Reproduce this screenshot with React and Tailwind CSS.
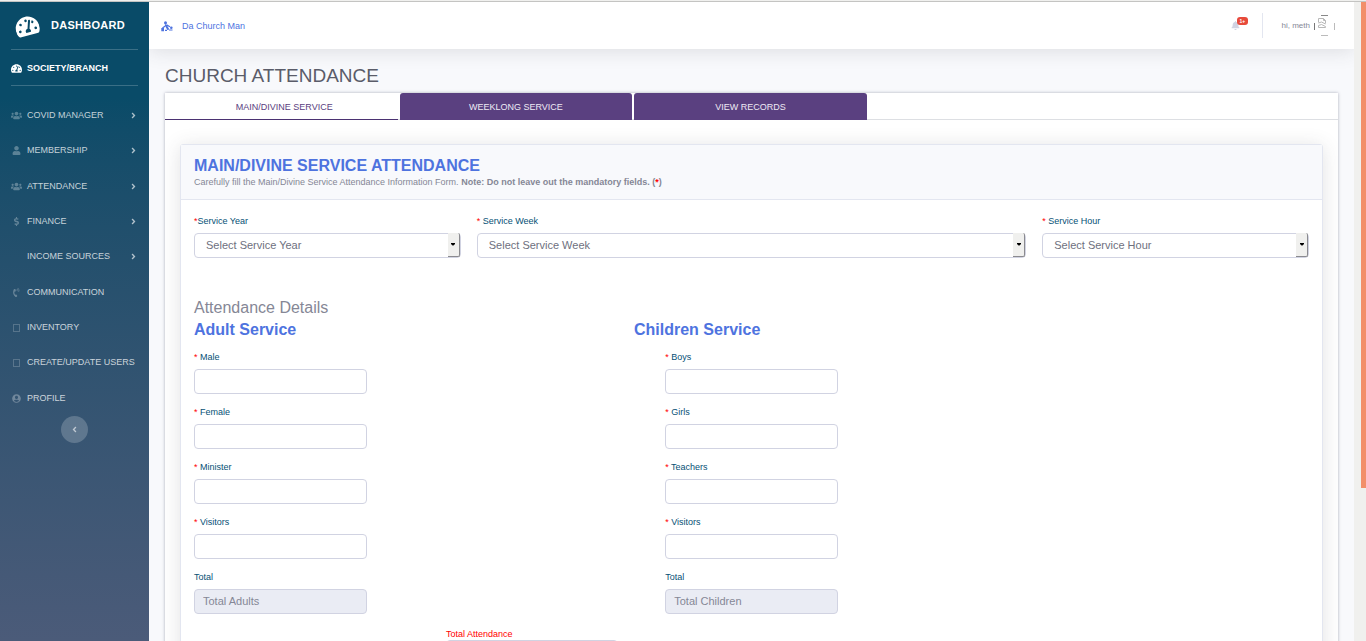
import React from "react";
import {
  FaTachometerAlt,
  FaUsers,
  FaUser,
  FaDollarSign,
  FaPhoneVolume,
  FaUserCircle,
  FaAngleRight,
  FaAngleLeft,
  FaBell,
} from "react-icons/fa";

function BoxGlyph() {
  return <span className="block h-2 w-[7px] border border-white/20" />;
}

const NAV = [
  { label: "COVID MANAGER", icon: <FaUsers size={11} />, more: true },
  { label: "MEMBERSHIP", icon: <FaUser size={9} />, more: true },
  { label: "ATTENDANCE", icon: <FaUsers size={11} />, more: true },
  { label: "FINANCE", icon: <FaDollarSign size={9} />, more: true },
  { label: "INCOME SOURCES", icon: null, more: true },
  { label: "COMMUNICATION", icon: <FaPhoneVolume size={9} className="-rotate-12" /> },
  { label: "INVENTORY", icon: <BoxGlyph /> },
  { label: "CREATE/UPDATE USERS", icon: <BoxGlyph /> },
  { label: "PROFILE", icon: <FaUserCircle size={9} /> },
];

function Sidebar() {
  return (
    <aside className="flex w-[149px] shrink-0 flex-col bg-linear-to-b from-[#094b68] from-15% to-[#4b5b79] text-[9px]">
      <a href="#" className="flex h-[47px] items-center gap-3 pl-[15px] text-[11px] font-bold tracking-wide text-white">
        <FaTachometerAlt size={24} className="-rotate-15" />
        DASHBOARD
      </a>
      <a
        href="#"
        className="mx-[11px] flex h-[37px] items-center gap-[5px] border-y border-white/20 pt-[2px] font-bold text-white"
      >
        <FaTachometerAlt size={11} />
        SOCIETY/BRANCH
      </a>
      <nav className="mt-3 grid h-[318px] auto-rows-fr">
        {NAV.map((item) => (
          <a key={item.label} href="#" className="flex items-center whitespace-nowrap pr-[11px] pl-[11px] text-white/75">
            <span className="mr-[5px] flex w-[11px] shrink-0 justify-center text-white/30">{item.icon}</span>
            <span className="flex-1">{item.label}</span>
            {item.more && <FaAngleRight size={9} className="shrink-0 text-white/65" />}
          </a>
        ))}
      </nav>
      <button
        type="button"
        aria-label="Collapse menu"
        className="flex size-[27px] items-center justify-center self-center rounded-full bg-white/20 text-white/60"
      >
        <FaAngleLeft size={9} />
      </button>
    </aside>
  );
}

function BrandIcon() {
  return (
    <svg width="12" height="11" viewBox="0 0 12 11" fill="none" aria-hidden="true">
      <circle cx="4.500" cy="1.700" r="1.500" fill="#4e73df" />
      <path d="M4.800 4.200L7 8" stroke="#4e73df" strokeWidth="2" strokeLinecap="round" />
      <path d="M6 4.200L8.500 5.500M3.600 5.500L1.800 6.800" stroke="#4e73df" strokeWidth="1.300" strokeLinecap="round" />
      <circle cx="10.300" cy="6.800" r="1.300" fill="#4e73df" />
      <path d="M.3 7h2.700v3.300H.3zM4 8.800h2v1.200H4zM8 8.500h3.500v1H8z" fill="#4e73df" />
    </svg>
  );
}

function BrokenAvatar() {
  return (
    <svg width="21" height="22" viewBox="0 0 21 22" fill="none" aria-hidden="true">
      <path d="M.5 8v7" stroke="#777" />
      <path d="M20.500 8v7" stroke="#bbb" />
      <path d="M7 .500h7" stroke="#888" />
      <path d="M7 20.500h7" stroke="#bbb" />
      <path d="M4.500 3.500h5l2 2v3M4.500 3.500v4M4.500 8l3-1 4 2M9.500 3.500v2h2M4.500 12.500v-2l3-1 4 2v1M4.500 12.500h7" stroke="#b8b8b8" />
    </svg>
  );
}

function Topbar() {
  return (
    <header className="relative z-10 flex h-[47px] shrink-0 items-center bg-white pr-[19px] pl-[12px] shadow-[0_2px_19px_rgba(58,59,69,0.15)]">
      <a href="#" className="flex items-center gap-[9px] pt-[2px] text-[9px] text-[#4e73df]">
        <BrandIcon />
        Da Church Man
      </a>
      <div className="ml-auto flex items-center">
        <button type="button" aria-label="Notifications" className="relative mr-[22px] block text-[#d1d3e2]">
          <FaBell size={9} />
          <span className="absolute -top-1 left-[6px] rounded-[3px] bg-[#e74a3b] px-[3px] text-[5px] leading-[8px] font-bold text-white">
            1+
          </span>
        </button>
        <span className="h-[25px] w-px bg-[#e3e6f0]" />
        <a href="#" className="ml-[19px] flex items-center gap-1 text-[8px] text-[#858796]">
          hi, meth
          <BrokenAvatar />
        </a>
      </div>
    </header>
  );
}

function Tab({ label, active }) {
  return (
    <div className="w-1/5 pr-[2px]">
      <button
        type="button"
        role="tab"
        aria-selected={!!active}
        className={
          active
            ? "block h-[27px] w-full border-b border-[#4b3272] bg-white pt-[3px] pl-[6px] text-[#5a4080]"
            : "block h-[27px] w-full rounded-t-[3px] bg-[#5a4080] pt-[2px] text-[#eeeaf4]"
        }
      >
        {label}
      </button>
    </div>
  );
}

function SelectField({ id, star, label, placeholder, className }) {
  return (
    <div className={className}>
      <label htmlFor={id} className="block text-[9px] leading-[13px] text-[#065075]">
        <span className="text-[#ff0000]">{star}</span>
        {label}
      </label>
      <div className="relative mt-1">
        <select
          id={id}
          className="h-[25px] w-full appearance-none rounded-[4px] border border-[#d1d3e2] bg-white pr-5 pl-[11px] text-[11px] text-[#6e707e]"
        >
          <option>{placeholder}</option>
        </select>
        <span className="pointer-events-none absolute top-px right-px bottom-px flex w-3 items-center justify-center rounded-r-[2px] border-r border-b border-[#8b8b8f] bg-[#f0f0ee]">
          <svg width="4" height="3" viewBox="0 0 4 3" aria-hidden="true">
            <path d="M0 0h4v1L2.500 2.500h-1L0 1z" fill="#000" />
          </svg>
        </span>
      </div>
    </div>
  );
}

function NumberField({ id, label, required = true, placeholder, className }) {
  return (
    <div className={className}>
      <label htmlFor={id} className="block text-[9px] leading-[13px] text-[#065075]">
        {required && <span className="text-[#ff0000]">* </span>}
        {label}
      </label>
      <input
        id={id}
        type="text"
        readOnly={!required}
        placeholder={placeholder}
        className={
          required
            ? "mt-[5px] block h-[25px] w-full rounded-[4px] border border-[#d1d3e2] bg-white px-2 text-[11px]"
            : "mt-[5px] block h-[25px] w-full rounded-[4px] border border-[#d1d3e2] bg-[#eaecf4] px-2 text-[11px] placeholder:text-[#858796]"
        }
      />
    </div>
  );
}

const ROWS = [
  ["Male", "Boys"],
  ["Female", "Girls"],
  ["Minister", "Teachers"],
  ["Visitors", "Visitors"],
];

function AttendanceForm() {
  return (
    <form className="mx-[15px] mt-6 mb-6 rounded-[3px] border border-[#e3e6f0] bg-white shadow-[0_2px_19px_rgba(58,59,69,0.15)]">
      <div className="border-b border-[#e3e6f0] bg-[#f8f9fc] px-[13px] pt-[11px] pb-[10px]">
        <h2 className="text-[16px] leading-[19px] font-bold text-[#4e73df]">MAIN/DIVINE SERVICE ATTENDANCE</h2>
        <p className="pt-px text-[9px] leading-[13px] text-[#858796]">
          Carefully fill the Main/Divine Service Attendance Information Form.{" "}
          <b>
            Note: Do not leave out the mandatory fields. (<span className="text-[#ff0000]">*</span>)
          </b>
        </p>
      </div>
      <div className="px-[13px] pt-[15px] pb-6">
        <div className="grid grid-cols-12 gap-x-4">
          <SelectField id="year" star="*" label="Service Year" placeholder="Select Service Year" className="col-span-3" />
          <SelectField id="week" star="* " label="Service Week" placeholder="Select Service Week" className="col-span-6" />
          <SelectField id="hour" star="* " label="Service Hour" placeholder="Select Service Hour" className="col-span-3" />
        </div>
        <h3 className="mt-[39px] text-[16px] leading-[22px] text-[#858796]">Attendance Details</h3>
        <div className="flex text-[16px] leading-[22px] font-bold text-[#4e73df]">
          <h4 className="w-[440px]">Adult Service</h4>
          <h4>Children Service</h4>
        </div>
        <div className="mt-[10px] grid grid-cols-12 gap-x-4 gap-y-3">
          {ROWS.map(([adult, child]) => (
            <React.Fragment key={adult}>
              <NumberField id={"adult-" + adult} label={adult} className="col-span-2 col-start-1" />
              <NumberField id={"child-" + child} label={child} className="col-span-2 col-start-6" />
            </React.Fragment>
          ))}
          <NumberField
            id="total-adults"
            label="Total"
            required={false}
            placeholder="Total Adults"
            className="col-span-2 col-start-1"
          />
          <NumberField
            id="total-children"
            label="Total"
            required={false}
            placeholder="Total Children"
            className="col-span-2 col-start-6"
          />
        </div>
        <div className="mt-[14px] ml-[252px] w-[172px]">
          <label htmlFor="total" className="block text-[9px] leading-3 text-[#ff0000]">
            Total Attendance
          </label>
          <input id="total" type="text" readOnly className="block h-[25px] w-full rounded-[4px] border border-[#d1d3e2] bg-[#eaecf4]" />
        </div>
      </div>
    </form>
  );
}

export default function App() {
  return (
    <div className="flex h-screen flex-col overflow-hidden bg-[#f8f9fc] font-['Liberation_Sans',Arial,sans-serif]">
      <div className="h-[2px] shrink-0 border-b border-[#c4c4c2] bg-[#f0f0ee]" />
      <div className="flex min-h-0 flex-1">
        <Sidebar />
        <div className="flex min-w-0 flex-1 flex-col overflow-hidden">
          <Topbar />
          <main className="min-h-0 flex-1 overflow-y-auto px-4 pt-4 [scrollbar-width:none]">
            <h1 className="text-[19px] leading-[22px] text-[#5a5c69]">CHURCH ATTENDANCE</h1>
            <section className="mt-[6px] bg-white shadow-[0_0_3px_rgba(58,59,90,0.4)]">
              <div role="tablist" className="flex border-b border-[#dddfe3] text-[9px] [&>div]:-mb-px">
                <Tab label="MAIN/DIVINE SERVICE" active />
                <Tab label="WEEKLONG SERVICE" />
                <Tab label="VIEW RECORDS" />
              </div>
              <div className="flow-root overflow-hidden">
                <AttendanceForm />
              </div>
            </section>
          </main>
        </div>
        <div className="flex w-3 shrink-0 justify-end bg-[#f0f0ee]">
          <div className="h-[76%] w-[5px] bg-[#f28f6a]" />
        </div>
      </div>
    </div>
  );
}
